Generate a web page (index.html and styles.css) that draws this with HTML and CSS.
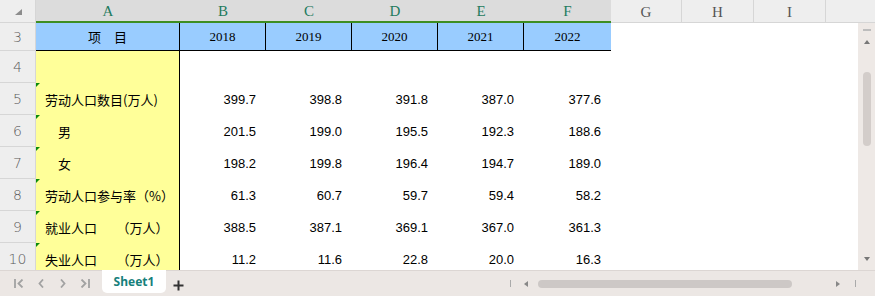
FILE: index.html
```html
<!DOCTYPE html>
<html lang="zh">
<head>
  <meta charset="UTF-8" />
  <title>Sheet1</title>
  <link rel="stylesheet" href="styles.css">
</head>
<body>
  <div class="sheet">
    <div class="colhead">
      <div class="corner"><span class="corner-tri"></span></div>
      <div class="ch sel w-a">A</div>
      <div class="ch sel w-n">B</div>
      <div class="ch sel w-n">C</div>
      <div class="ch sel w-n">D</div>
      <div class="ch sel w-n">E</div>
      <div class="ch sel w-f">F</div>
      <div class="ch w-g">G</div>
      <div class="ch w-h">H</div>
      <div class="ch w-h">I</div>
      <div class="ch w-j"></div>
    </div>

    <div class="main">
      <div class="rows">
        <div class="row r3">
          <div class="cell rh">3</div>
          <div class="cell a">项　目</div>
          <div class="cell n">2018</div>
          <div class="cell n">2019</div>
          <div class="cell n">2020</div>
          <div class="cell n">2021</div>
          <div class="cell n f last">2022</div>
        </div>
        <div class="row">
          <div class="cell rh">4</div>
          <div class="cell a"></div>
        </div>
        <div class="row">
          <div class="cell rh">5</div>
          <div class="cell a mark">劳动人口数目(万人)</div>
          <div class="cell n">399.7</div>
          <div class="cell n">398.8</div>
          <div class="cell n">391.8</div>
          <div class="cell n">387.0</div>
          <div class="cell n f">377.6</div>
        </div>
        <div class="row">
          <div class="cell rh">6</div>
          <div class="cell a mark">　男</div>
          <div class="cell n">201.5</div>
          <div class="cell n">199.0</div>
          <div class="cell n">195.5</div>
          <div class="cell n">192.3</div>
          <div class="cell n f">188.6</div>
        </div>
        <div class="row">
          <div class="cell rh">7</div>
          <div class="cell a mark">　女</div>
          <div class="cell n">198.2</div>
          <div class="cell n">199.8</div>
          <div class="cell n">196.4</div>
          <div class="cell n">194.7</div>
          <div class="cell n f">189.0</div>
        </div>
        <div class="row">
          <div class="cell rh">8</div>
          <div class="cell a mark">劳动人口参与率（%）</div>
          <div class="cell n">61.3</div>
          <div class="cell n">60.7</div>
          <div class="cell n">59.7</div>
          <div class="cell n">59.4</div>
          <div class="cell n f">58.2</div>
        </div>
        <div class="row">
          <div class="cell rh">9</div>
          <div class="cell a mark">就业人口　　（万人）</div>
          <div class="cell n">388.5</div>
          <div class="cell n">387.1</div>
          <div class="cell n">369.1</div>
          <div class="cell n">367.0</div>
          <div class="cell n f">361.3</div>
        </div>
        <div class="row">
          <div class="cell rh">10</div>
          <div class="cell a mark">失业人口　　（万人）</div>
          <div class="cell n">11.2</div>
          <div class="cell n">11.6</div>
          <div class="cell n">22.8</div>
          <div class="cell n">20.0</div>
          <div class="cell n f">16.3</div>
        </div>
      </div>

      <div class="vscroll">
        <span class="vs-min"></span>
        <span class="tri-up"></span>
        <span class="vs-thumb"></span>
        <span class="tri-down"></span>
      </div>
    </div>

    <div class="bottom">
      <div class="nav">
        <span class="nav-btn"><svg width="10" height="9" viewBox="0 0 10 9"><path d="M1 0v9M8.5 0.5L4.5 4.5L8.5 8.5" /></svg></span>
        <span class="nav-btn"><svg width="6" height="9" viewBox="0 0 6 9"><path d="M5 0.5L1.5 4.5L5 8.5" /></svg></span>
        <span class="nav-btn"><svg width="6" height="9" viewBox="0 0 6 9"><path d="M1 0.5L4.5 4.5L1 8.5" /></svg></span>
        <span class="nav-btn"><svg width="10" height="9" viewBox="0 0 10 9"><path d="M1.5 0.5L5.5 4.5L1.5 8.5M9 0v9" /></svg></span>
      </div>
      <div class="tab">Sheet1</div>
      <span class="add"><svg width="11" height="11" viewBox="0 0 11 11"><path d="M5.5 0.5v10M0.5 5.5h10" /></svg></span>

      <div class="hscroll">
        <span class="hs-bar"></span>
        <span class="tri-left"></span>
        <span class="hs-thumb"></span>
        <span class="tri-right"></span>
        <span class="hs-bar"></span>
      </div>
    </div>
  </div>
</body>
</html>
```

FILE: styles.css
```css
body {
  margin: 0;
  font-family: "Liberation Sans", Arial, sans-serif;
  background: #fff;
  overflow: hidden;
}
.sheet {
  width: 875px;
  height: 296px;
  display: flex;
  flex-direction: column;
}

/* column header */
.colhead {
  display: flex;
  height: 23px;
}
.colhead > div {
  box-sizing: border-box;
  height: 23px;
}
.corner {
  width: 36px;
  background: #eeeeee;
  border-right: 1px solid #d6d6d6;
  border-bottom: 1px solid #d6d6d6;
  position: relative;
}
.corner-tri {
  position: absolute;
  left: 15px;
  top: 9px;
  width: 0;
  height: 0;
  border-left: 7px solid transparent;
  border-bottom: 6px solid #8c8c8c;
}
.ch {
  display: flex;
  align-items: center;
  justify-content: center;
  padding-top: 2px;
  font-family: "Liberation Serif", serif;
  font-size: 15px;
  color: #555;
  background: #eeeeee;
  border-bottom: 1px solid #d6d6d6;
  border-right: 1px solid #d6d6d6;
}
.ch.sel {
  background: #dcdcdc;
  color: #1e7b5e;
  border-right: none;
  border-bottom: 2px solid #3e8e22;
}
.w-a { width: 144px; }
.w-n { width: 86px; }
.w-f { width: 87px; }
.w-g { width: 71px; }
.w-h { width: 72px; }
.w-j { width: 49px; border-right: none !important; }

/* grid body */
.main {
  display: flex;
  height: 247px;
}
.rows {
  width: 858px;
  height: 247px;
  overflow: hidden;
}
.row {
  display: flex;
  height: 32px;
}
.row.r3 {
  height: 28px;
}
.cell {
  box-sizing: border-box;
  height: 100%;
  display: flex;
  align-items: center;
  white-space: nowrap;
}
.rh {
  width: 36px;
  justify-content: center;
  background: #eeeeee;
  border-right: 1px solid #d6d6d6;
  border-bottom: 1px solid #d6d6d6;
  font-family: "DejaVu Sans", sans-serif;
  font-weight: 300;
  font-size: 14px;
  color: #5a5a5a;
}
.a {
  width: 144px;
  padding-left: 9px;
  background: #ffff99;
  border-right: 1px solid #000;
  font-family: "Noto Sans CJK SC", sans-serif;
  font-size: 13px;
  color: #000;
  position: relative;
}
.mark::before {
  content: "";
  position: absolute;
  left: 0;
  top: 0;
  border-top: 4px solid #0a8a0a;
  border-right: 4px solid transparent;
}
.n {
  width: 86px;
  justify-content: flex-end;
  padding-right: 10px;
  font-size: 13px;
  color: #000;
}
.n.f {
  width: 87px;
}
.r3 .a,
.r3 .n {
  background: #99ccff;
  border-right: 1px solid #000;
  border-bottom: 1px solid #000;
  justify-content: center;
  padding: 0;
}
.r3 .n {
  font-family: "Liberation Serif", serif;
  font-size: 13px;
}
.r3 .last {
  border-right: none;
}

/* vertical scrollbar */
.vscroll {
  width: 17px;
  background: #eee9e6;
  display: flex;
  flex-direction: column;
  align-items: center;
}
.vs-min {
  width: 8px;
  height: 2px;
  margin-top: 6px;
  background: #bdbdbd;
}
.tri-up {
  margin-top: 9px;
  border-left: 3px solid transparent;
  border-right: 3px solid transparent;
  border-bottom: 4px solid #777;
}
.vs-thumb {
  width: 8px;
  height: 74px;
  margin-top: 28px;
  border-radius: 4px;
  background: #d3cdca;
}
.tri-down {
  margin-top: auto;
  margin-bottom: 9px;
  border-left: 3px solid transparent;
  border-right: 3px solid transparent;
  border-top: 4px solid #777;
}

/* bottom bar */
.bottom {
  display: flex;
  align-items: flex-start;
  height: 26px;
  box-sizing: border-box;
  background: #ece7e4;
  border-top: 1px solid #dcd6d3;
}
.nav {
  display: flex;
  padding-left: 8px;
  margin-top: 8px;
}
.nav-btn {
  width: 22px;
  display: flex;
  justify-content: center;
}
.nav-btn svg path {
  fill: none;
  stroke: #a2a2a2;
  stroke-width: 1.8;
}
.tab {
  margin-left: 6px;
  margin-top: -1px;
  width: 64px;
  height: 23px;
  background: #fff;
  border-radius: 0 0 5px 5px;
  display: flex;
  align-items: center;
  justify-content: center;
  font-family: "Noto Sans", sans-serif;
  font-weight: bold;
  font-size: 12px;
  color: #16807b;
}
.add {
  width: 22px;
  margin-left: 1px;
  margin-top: 9px;
  display: flex;
  justify-content: center;
}
.add svg path {
  stroke: #333;
  stroke-width: 2;
}
.hscroll {
  margin-left: auto;
  padding-right: 19px;
  margin-top: 8px;
  display: flex;
  align-items: center;
  height: 9px;
}
.hs-bar {
  width: 1px;
  height: 7px;
  background: #aaa;
}
.tri-left {
  margin-left: 13px;
  border-top: 3px solid transparent;
  border-bottom: 3px solid transparent;
  border-right: 4px solid #888;
}
.hs-thumb {
  margin-left: 10px;
  width: 254px;
  height: 8px;
  border-radius: 4px;
  background: #cdc8c6;
}
.tri-right {
  margin-left: 44px;
  border-top: 3px solid transparent;
  border-bottom: 3px solid transparent;
  border-left: 4px solid #888;
}
.tri-right + .hs-bar {
  margin-left: 15px;
}
```
